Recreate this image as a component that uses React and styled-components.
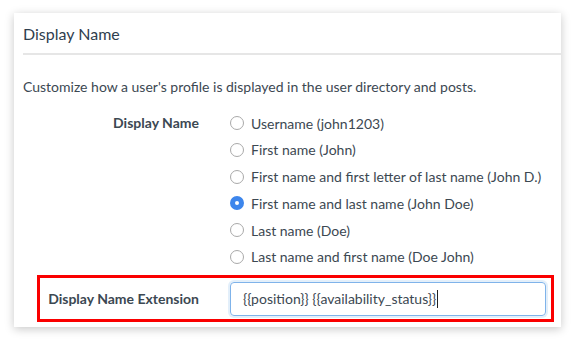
import React from 'react';
import styled, { createGlobalStyle } from 'styled-components';

const options = [
  'Username (john1203)',
  'First name (John)',
  'First name and first letter of last name (John D.)',
  'First name and last name (John Doe)',
  'Last name (Doe)',
  'Last name and first name (Doe John)',
];

export default function App() {
  const selected = 3;

  return (
    <Page>
      <GlobalStyle />
      <Card>
        <Header>Display Name</Header>
        <Description>
          Customize how a user's profile is displayed in the user directory and posts.
        </Description>
        <FormRow>
          <Label>Display Name</Label>
          <RadioList>
            {options.map((option, index) => (
              <Option key={option}>
                <Radio checked={index === selected} />
                {option}
              </Option>
            ))}
          </RadioList>
        </FormRow>
        <Highlight>
          <Label>Display Name Extension</Label>
          <TextBox>
            {'{{position}} {{availability_status}}'}
            <Caret />
          </TextBox>
        </Highlight>
      </Card>
    </Page>
  );
}

const GlobalStyle = createGlobalStyle`
  body {
    margin: 0;
    background: #fff;
    font-family: Lato, "Open Sans", sans-serif;
    color: #3c4852;
  }
`;

const Page = styled.div`
  padding: 13px 14px;
`;

const Card = styled.div`
  width: 547px;
  height: 314px;
  box-sizing: border-box;
  padding: 0 7px 0 9px;
  background: #fff;
  box-shadow: 0 2px 9px rgba(0, 0, 0, 0.22);
`;

const Header = styled.div`
  height: 40px;
  display: flex;
  align-items: center;
  margin-right: -7px;
  border-bottom: 2px solid #e6e6e6;
  font-size: 16px;
  color: #2f3e4e;
`;

const Description = styled.p`
  margin: 0;
  padding: 22px 0 16px;
  font-size: 14px;
  line-height: 20px;
`;

const FormRow = styled.div`
  display: grid;
  grid-template-columns: 176px 1fr;
  column-gap: 31px;
`;

const Label = styled.div`
  text-align: right;
  font-weight: 700;
  font-size: 14px;
  line-height: 20px;
  color: #3c4852;
`;

const RadioList = styled.div`
  display: flex;
  flex-direction: column;
  gap: 6.8px;
`;

const Option = styled.label`
  display: flex;
  align-items: center;
  gap: 7px;
  height: 20px;
  font-size: 14px;
`;

const Radio = styled.span`
  width: 14px;
  height: 14px;
  border-radius: 50%;
  box-sizing: border-box;
  border: ${(p) => (p.checked ? '5px solid #3d86ec' : '1px solid #a9a9a9')};
  background: #fff;
  flex: none;
`;

const Highlight = styled.div`
  display: grid;
  grid-template-columns: 159px 1fr;
  column-gap: 31px;
  align-items: center;
  margin: 8px 0 0 14px;
  padding: 4px 5px 3px 0;
  border: 3px solid #fa0000;
`;

const TextBox = styled.div`
  height: 34px;
  box-sizing: border-box;
  display: flex;
  align-items: center;
  padding: 0 12px;
  border: 1px solid #7fb3ea;
  border-radius: 4px;
  box-shadow: 0 0 0 2px rgba(128, 180, 234, 0.22);
  font-size: 14px;
  color: #3c4852;
`;

const Caret = styled.span`
  width: 1px;
  height: 18px;
  margin-left: 1px;
  background: #222;
`;
